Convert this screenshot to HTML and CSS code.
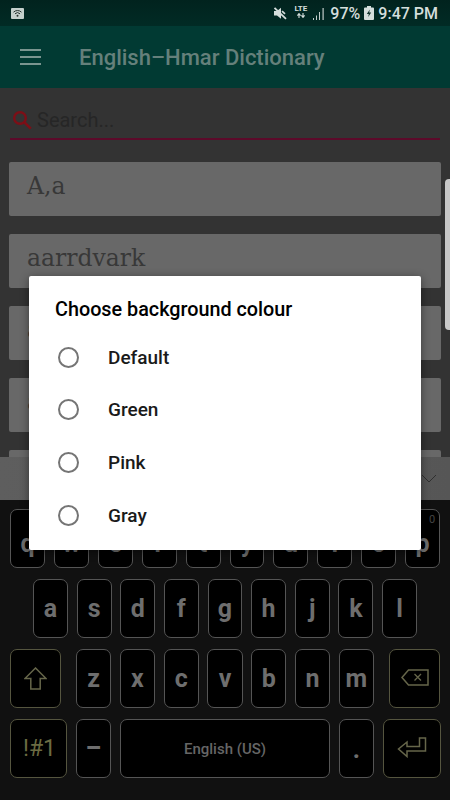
FILE: index.html

```html
<!DOCTYPE html>
<html lang="en">
<head>
  <meta charset="UTF-8">
  <title>English-Hmar Dictionary</title>
  <link rel="stylesheet" href="styles.css">
</head>
<body>
  <div class="screen">
    <!-- Status bar -->
    <div class="status">
      <svg class="wifi" width="13" height="11" viewBox="0 0 13 11">
        <rect width="13" height="11" rx="1" fill="#c4d0cc"/>
        <path d="M2.5 4.2a5.6 5.6 0 0 1 8 0M4 5.8a3.5 3.5 0 0 1 5 0" fill="none" stroke="#26332f" stroke-width="1"/>
        <circle cx="6.5" cy="7.8" r="1" fill="#26332f"/>
      </svg>
      <div class="status-right">
        <svg class="mute" width="14" height="13" viewBox="0 0 14 13">
          <path d="M1 4h3L8 .8v11L4 8.500H1z" fill="#d5dedc"/>
          <path d="M9 4.200l3 2.600" stroke="#d5dedc" stroke-width="1.700"/>
          <path d="M1.500 .8l11.500 11" stroke="#d5dedc" stroke-width="1.800"/>
        </svg>
        <div class="lte">
          <span>LTE</span>
          <svg width="10" height="5" viewBox="0 0 10 5">
            <path d="M3 5V1.6M1.4 2.6L3 .6l1.6 2M7 0v3.4M5.4 2.4L7 4.4l1.6-2" fill="none" stroke="#d5dedc" stroke-width="1.1"/>
          </svg>
        </div>
        <svg class="signal" width="13" height="13" viewBox="0 0 13 13">
          <path d="M1 11h1v2H1zM4 8.500h1V13H4zM7 5h1v8H7zM10.500 1h1.200v12h-1.200z" fill="#c0cbc8"/>
        </svg>
        <span class="pct">97%</span>
        <svg class="batt" width="10" height="14" viewBox="0 0 10 14">
          <path d="M3 0h4v1.500h2a1 1 0 0 1 1 1V13a1 1 0 0 1-1 1H1a1 1 0 0 1-1-1V2.500a1 1 0 0 1 1-1h2z" fill="#d5dedc"/>
          <path d="M5.800 3.500L2.800 8h2l-.6 3 3-4.500h-2z" fill="#12332d"/>
        </svg>
        <span class="time">9:47 PM</span>
      </div>
    </div>

    <!-- App bar -->
    <div class="appbar">
      <div class="burger"><i></i><i></i><i></i></div>
      <div class="title">English–Hmar Dictionary</div>
    </div>

    <!-- Word list -->
    <div class="main">
      <div class="search">
        <svg width="21" height="20" viewBox="0 0 21 20">
          <circle cx="8" cy="8" r="5.800" fill="none" stroke="#7c0f17" stroke-width="2.400"/>
          <path d="M12.300 12.300l6.500 6.300" stroke="#7c0f17" stroke-width="2.600"/>
        </svg>
        <span>Search...</span>
      </div>
      <div class="word">A,a</div>
      <div class="word">aarrdvark</div>
      <div class="word">aback</div>
      <div class="word">abacus</div>
      <div class="word"></div>
    </div>

    <!-- Keyboard -->
    <div class="suggest">
      <svg width="16" height="10" viewBox="0 0 16 10">
        <path d="M1 1l7 7 7-7" fill="none" stroke="#2f2f2f" stroke-width="1"/>
      </svg>
    </div>
    <div class="keyboard">
      <div class="row top-row">
        <div class="key">q</div>
        <div class="key">w</div>
        <div class="key">e</div>
        <div class="key">r</div>
        <div class="key">t</div>
        <div class="key">y</div>
        <div class="key">u</div>
        <div class="key">i</div>
        <div class="key">o</div>
        <div class="key"><em>0</em>p</div>
      </div>
      <div class="row home-row">
        <div class="key">a</div>
        <div class="key">s</div>
        <div class="key">d</div>
        <div class="key">f</div>
        <div class="key">g</div>
        <div class="key">h</div>
        <div class="key">j</div>
        <div class="key">k</div>
        <div class="key">l</div>
      </div>
      <div class="row shift-row">
        <div class="key fn wide">
          <svg width="23" height="23" viewBox="0 0 23 23">
            <path d="M11.500 1L1 11.500h5.800V22h9.400V11.500H22z" fill="none" stroke="#66664a" stroke-width="1.500"/>
          </svg>
        </div>
        <div class="letters">
          <div class="key">z</div>
          <div class="key">x</div>
          <div class="key">c</div>
          <div class="key">v</div>
          <div class="key">b</div>
          <div class="key">n</div>
          <div class="key">m</div>
        </div>
        <div class="key fn wide">
          <svg class="back-icon" width="28" height="17" viewBox="0 0 28 17">
            <path d="M7.500 1H27v15H7.500L1 8.500z" fill="none" stroke="#66664a" stroke-width="1.500"/>
            <path d="M13.500 5l6.500 6.500M20 5l-6.500 6.500" stroke="#66664a" stroke-width="1.300"/>
          </svg>
        </div>
      </div>
      <div class="row bottom-row">
        <div class="key fn sym">!#1</div>
        <div class="key dash">–</div>
        <div class="key space">English (US)</div>
        <div class="key dot">.</div>
        <div class="key fn enter">
          <svg class="enter-icon" width="30" height="21" viewBox="0 0 30 21">
            <path d="M28.500 1v13H10v5.500L1.500 12 10 5v4.500h12.500V1z" fill="none" stroke="#66664a" stroke-width="1.500"/>
          </svg>
        </div>
      </div>
    </div>

    <div class="thumb"></div>

    <!-- Background colour dialog -->
    <div class="dialog">
      <h3>Choose background colour</h3>
      <div class="option"><span class="radio"></span>Default</div>
      <div class="option"><span class="radio"></span>Green</div>
      <div class="option"><span class="radio"></span>Pink</div>
      <div class="option"><span class="radio"></span>Gray</div>
    </div>
  </div>
</body>
</html>
```

FILE: styles.css

```css
html, body { margin: 0; padding: 0; }
body { font-family: Roboto, sans-serif; background: #111; }
.screen {
  position: relative; width: 450px; height: 800px; overflow: hidden;
  display: flex; flex-direction: column; background: #333;
}

.status {
  height: 26px; flex: none; display: flex; align-items: center; justify-content: space-between;
  padding: 0 12px 0 11px; box-sizing: border-box;
  background: linear-gradient(#01231e, #012b25);
}
.wifi { display: block; margin-top: 1px; }
.status-right { display: flex; align-items: center; color: #d5dedc; font-weight: 500; font-size: 16px; }
.mute { margin-right: 7px; }
.lte {
  display: flex; flex-direction: column; align-items: center; width: 13px; margin-right: 5px;
  font-size: 8px; font-weight: 700; line-height: 8px; margin-top: -3px;
}
.lte svg { display: block; }
.signal { margin-right: 5px; }
.pct { margin-right: 4px; }
.batt { margin-right: 4px; }

.appbar {
  height: 62px; flex: none; display: flex; align-items: center; padding-left: 20px;
  box-sizing: border-box; background: #013a33;
}
.burger { width: 21px; display: flex; flex-direction: column; gap: 5px; margin-right: 38px; }
.burger i { display: block; height: 2px; background: #7a9590; }
.title { font-size: 22px; font-weight: 500; color: #65807b; }

.main { height: 369px; flex: none; overflow: hidden; display: flex; flex-direction: column; gap: 18px; }
.search {
  height: 38px; margin: 12px 10px 4px; flex: none; display: flex; align-items: center; gap: 4px;
  padding-left: 2px; border-bottom: 2px solid #5c0a2a;
  color: #262626; font-size: 20px;
}
.search svg { margin-top: 2px; }
.search span { margin-top: 2px; }
.word {
  height: 54px; flex: none; margin: 0 9px; padding: 0 0 7px 18px; box-sizing: border-box;
  display: flex; align-items: center; border-radius: 2px;
  background: #686868; color: #383838;
  font-family: "DejaVu Serif", serif; font-size: 23.500px;
}

.suggest {
  height: 43px; flex: none; display: flex; align-items: center; justify-content: flex-end;
  padding-right: 13px; box-sizing: border-box; background: linear-gradient(90deg, #5e5e5e, #565656);
}
.keyboard {
  flex: 1; background: #111; padding-top: 9px; box-sizing: border-box;
  display: flex; flex-direction: column; gap: 11px;
}
.row { height: 59px; display: flex; }
.top-row { gap: 9px; padding: 0 10px; }
.home-row { gap: 8.7px; padding: 0 33px; }
.shift-row { gap: 15px; padding: 0 10px; }
.bottom-row { gap: 9px; padding: 0 10px; }
.letters { flex: 1; display: flex; gap: 8.7px; }

.key {
  position: relative; flex: 1; display: flex; align-items: center; justify-content: center;
  box-sizing: border-box; border: 1.5px solid #555; border-radius: 7px; background: #000;
  color: #6e6e6e; font-size: 25px; font-weight: 700;
}
.top-row .key { padding-top: 10px; }
.key em {
  position: absolute; top: 3px; right: 4px; font-style: normal; font-weight: 400;
  font-size: 11px; color: #444;
}
.fn { border-color: #55553f; color: #6b6b42; }
.wide { flex: none; width: 51px; }
.sym { flex: none; width: 57px; padding-left: 2px; font-size: 23px; font-weight: 400; }
.dash { flex: none; width: 35px; }
.space { flex: none; width: 210px; font-size: 15px; font-weight: 500; color: #666; }
.dot { flex: none; width: 35px; padding-top: 2px; }
.enter { flex: none; width: 58px; }
.back-icon { margin-bottom: 2px; }
.enter-icon { margin-bottom: 2px; }

.thumb {
  position: absolute; top: 179px; right: 0; width: 5px; height: 151px;
  border-radius: 4px 0 0 4px; background: #c8c8c8;
}

.dialog {
  position: absolute; left: 29px; top: 276px; width: 392px; height: 274px;
  padding: 21px 0 0 26px; box-sizing: border-box;
  background: #fff; border-radius: 2px; box-shadow: 0 2px 10px rgba(0,0,0,0.45);
}
.dialog h3 { margin: 0 0 8px; font-size: 19.800px; line-height: 26px; font-weight: 500; color: #000; }
.option {
  height: 52.600px; display: flex; align-items: center;
  font-size: 19px; font-weight: 500; color: #1a1a1a;
}
.radio {
  width: 21px; height: 21px; box-sizing: border-box; border: 2px solid #757575; border-radius: 50%;
  margin: 0 29px 0 3px;
}
```
